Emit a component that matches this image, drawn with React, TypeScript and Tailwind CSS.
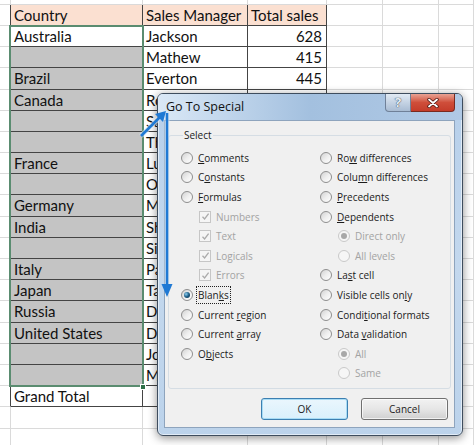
import React from "react";

type Row = { a: string; b: string; c: string; kind: "header" | "body" | "total" };

const rows: Row[] = [
  { a: "Country", b: "Sales Manager", c: "Total sales", kind: "header" },
  { a: "Australia", b: "Jackson", c: "628", kind: "body" },
  { a: "", b: "Mathew", c: "415", kind: "body" },
  { a: "Brazil", b: "Everton", c: "445", kind: "body" },
  { a: "Canada", b: "Robert", c: "512", kind: "body" },
  { a: "", b: "Sam", c: "", kind: "body" },
  { a: "", b: "Thomas", c: "", kind: "body" },
  { a: "France", b: "Luis", c: "", kind: "body" },
  { a: "", b: "Oliver", c: "", kind: "body" },
  { a: "Germany", b: "Mark", c: "", kind: "body" },
  { a: "India", b: "Shawn", c: "", kind: "body" },
  { a: "", b: "Simon", c: "", kind: "body" },
  { a: "Italy", b: "Paul", c: "", kind: "body" },
  { a: "Japan", b: "Taro", c: "", kind: "body" },
  { a: "Russia", b: "Denis", c: "", kind: "body" },
  { a: "United States", b: "Daniel", c: "", kind: "body" },
  { a: "", b: "John", c: "", kind: "body" },
  { a: "", b: "Mike", c: "", kind: "body" },
  { a: "Grand Total", b: "", c: "", kind: "total" },
];

type Opt = {
  t: string;
  k?: number;
  cb?: boolean;
  indent?: boolean;
  disabled?: boolean;
  checked?: boolean;
  focus?: boolean;
};

const leftOpts: Opt[] = [
  { t: "Comments", k: 0 },
  { t: "Constants", k: 1 },
  { t: "Formulas", k: 0 },
  { t: "Numbers", cb: true, indent: true, disabled: true },
  { t: "Text", cb: true, indent: true, disabled: true },
  { t: "Logicals", cb: true, indent: true, disabled: true },
  { t: "Errors", cb: true, indent: true, disabled: true },
  { t: "Blanks", k: 4, checked: true, focus: true },
  { t: "Current region", k: 8 },
  { t: "Current array", k: 8 },
  { t: "Objects", k: 1 },
];

const rightOpts: Opt[] = [
  { t: "Row differences", k: 2 },
  { t: "Column differences", k: 4 },
  { t: "Precedents", k: 0 },
  { t: "Dependents", k: 0 },
  { t: "Direct only", indent: true, disabled: true, checked: true },
  { t: "All levels", indent: true, disabled: true },
  { t: "Last cell", k: 2 },
  { t: "Visible cells only", k: 16 },
  { t: "Conditional formats", k: 5 },
  { t: "Data validation", k: 5 },
  { t: "All", indent: true, disabled: true, checked: true },
  { t: "Same", indent: true, disabled: true },
];

function SheetRow({ row }: { row: Row }) {
  const grid = "border-r border-b border-[#dadada]";
  const dark = "border-r border-b border-[#444]";
  const head = row.kind === "header" ? "bg-[#fbe0d1]" : "bg-white";
  const countryBg =
    row.kind === "header" ? "bg-[#fbe0d1]" : row.kind === "body" && row.a !== "Australia" ? "bg-[#c4c4c4]" : "bg-white";
  return (
    <div className="flex h-[21.2px] leading-[21px]">
      <div className="w-[11px] shrink-0 border-r border-b border-r-[#444] border-b-[#dadada]" />
      <div className={`w-[132px] shrink-0 pl-[3px] ${dark} ${countryBg}`}>{row.a}</div>
      <div className={`w-[105px] shrink-0 pl-[3px] overflow-hidden whitespace-nowrap ${dark} ${head}`}>{row.b}</div>
      <div
        className={`w-[79px] shrink-0 ${dark} ${head} ${row.kind === "header" ? "pl-[3px]" : "pr-[4px] text-right"}`}
      >
        {row.c}
      </div>
      <div className={`w-[56px] shrink-0 ${grid}`} />
      <div className={`w-[56px] shrink-0 ${grid}`} />
      <div className={`flex-1 ${grid}`} />
    </div>
  );
}

function EmptyRow({ h }: { h: string }) {
  const grid = "border-r border-b border-[#dadada]";
  return (
    <div className={`flex ${h}`}>
      <div className={`w-[11px] shrink-0 ${grid}`} />
      <div className={`w-[132px] shrink-0 ${grid}`} />
      <div className={`w-[105px] shrink-0 ${grid}`} />
      <div className={`w-[79px] shrink-0 ${grid}`} />
      <div className={`w-[56px] shrink-0 ${grid}`} />
      <div className={`w-[56px] shrink-0 ${grid}`} />
      <div className={`flex-1 ${grid}`} />
    </div>
  );
}

function Radio({ checked, disabled }: { checked?: boolean; disabled?: boolean }) {
  return (
    <span
      className={`flex h-[12px] w-[12px] shrink-0 items-center justify-center rounded-full border ${
        disabled
          ? "border-[#c9c9c9] bg-[#f6f6f6]"
          : "border-[#8e8e8e] bg-linear-to-br from-[#d2d2d2] via-[#eeeeee] to-white"
      }`}
    >
      {checked && (
        <span
          className={`h-[6px] w-[6px] rounded-full ${
            disabled ? "bg-[#a8a8a8]" : "bg-radial-[at_35%_35%] from-[#8fd0f0] via-[#1d5d86] to-[#0d2a40]"
          }`}
        />
      )}
    </span>
  );
}

function Check() {
  return (
    <span className="flex h-[12px] w-[12px] shrink-0 items-center justify-center border border-[#c6c6c6] bg-[#f5f5f5]">
      <svg width="9" height="9" viewBox="0 0 9 9">
        <path d="M1.5 4.8 L3.6 7 L7.6 1.6" fill="none" stroke="#ababab" strokeWidth="1.3" />
      </svg>
    </span>
  );
}

function Label({ o }: { o: Opt }) {
  const text =
    o.k === undefined ? (
      o.t
    ) : (
      <>
        {o.t.slice(0, o.k)}
        <u className="underline-offset-[1px]">{o.t[o.k]}</u>
        {o.t.slice(o.k + 1)}
      </>
    );
  return (
    <span
      className={`whitespace-nowrap ${o.disabled ? "text-[#a3a3a3]" : "text-[#1b1b1b]"} ${
        o.focus ? "outline outline-1 outline-dotted outline-[#222] outline-offset-[1px]" : ""
      }`}
    >
      {text}
    </span>
  );
}

function Option({ o }: { o: Opt }) {
  return (
    <div className={`flex h-[19.6px] items-center gap-[5px] ${o.indent ? "pl-[18px]" : ""}`}>
      {o.cb ? <Check /> : <Radio checked={o.checked} disabled={o.disabled} />}
      <Label o={o} />
    </div>
  );
}

function Dialog() {
  return (
    <div
      className="absolute left-[157px] top-[93px] flex h-[343px] w-[306px] flex-col rounded-[6px] border border-[#3e4d5e] bg-linear-to-b from-[#b6cfea] via-[#c3d8ee] to-[#bcd3eb] shadow-[0_2px_10px_rgba(0,0,0,0.45),inset_0_0_0_1px_rgba(255,255,255,0.55)]"
      style={{ fontFamily: '"Open Sans", "Noto Sans", sans-serif' }}
    >
      <div className="flex h-[26px] shrink-0 items-start justify-between rounded-t-[5px] bg-linear-to-r from-[#dae8f6] via-[#a3c0df] to-[#b0c9e5] pl-[8px] pr-[7px]">
        <span className="self-center text-[12.5px] text-[#111]">Go To Special</span>
        <div className="flex">
          <div className="flex h-[18px] w-[26px] items-center justify-center rounded-bl-[4px] border border-t-0 border-[#6f8098] bg-linear-to-b from-[#e1eaf4] to-[#a9bcd3]">
            <span className="text-[13px] font-bold leading-none text-[#e8eef5] [text-shadow:0_0_1px_#3a4a5e,0_0_1px_#3a4a5e]">
              ?
            </span>
          </div>
          <div className="flex h-[18px] w-[44px] items-center justify-center rounded-br-[4px] border border-l-0 border-t-0 border-[#7a2a20] bg-linear-to-b from-[#e8a294] via-[#cf4e3a] to-[#c43c2a]">
            <svg width="12" height="10" viewBox="0 0 12 10">
              <path d="M2 1.5 L10 8.5 M10 1.5 L2 8.5" stroke="#4a1510" strokeWidth="3.4" strokeLinecap="round" />
              <path d="M2 1.5 L10 8.5 M10 1.5 L2 8.5" stroke="#ffffff" strokeWidth="1.8" strokeLinecap="round" />
            </svg>
          </div>
        </div>
      </div>
      <div className="mb-[7px] ml-[6px] mr-[7px] flex-1 border border-[#8ea4bd] bg-[#f0f0f0] px-[3px] pt-[7px] text-[10px] leading-[14px]">
        <fieldset className="rounded-[3px] border border-[#d5dde4] pb-[5px] pl-[12px] pt-[6px]">
          <legend className="ml-[2px] px-[1px] text-[#1b1b1b]">Select</legend>
          <div className="flex">
            <div className="w-[139px] shrink-0">
              {leftOpts.map((o) => (
                <Option key={o.t} o={o} />
              ))}
            </div>
            <div>
              {rightOpts.map((o) => (
                <Option key={o.t} o={o} />
              ))}
            </div>
          </div>
        </fieldset>
        <div className="mt-[9px] flex justify-end gap-[13px] pr-[3px]">
          <button className="h-[22px] w-[87px] rounded-[3px] border border-[#3c7fb1] bg-linear-to-b from-[#eaf6fd] to-[#d9f0fc] text-[#1b1b1b] shadow-[inset_0_0_0_1px_#a8dcf5]">
            OK
          </button>
          <button className="h-[22px] w-[87px] rounded-[3px] border border-[#707070] bg-linear-to-b from-[#f2f2f2] via-[#e6e6e6] to-[#d0d0d0] text-[#1b1b1b] shadow-[inset_0_0_0_1px_rgba(255,255,255,0.7)]">
            Cancel
          </button>
        </div>
      </div>
    </div>
  );
}

function Arrows() {
  return (
    <svg className="pointer-events-none absolute left-0 top-0" width="474" height="445" viewBox="0 0 474 445">
      <g stroke="#dbe9f7" strokeWidth="5" opacity="0.6">
        <line x1="167" y1="113" x2="167" y2="286" />
        <line x1="141" y1="136" x2="161" y2="116" />
      </g>
      <g stroke="#1f79d4" strokeWidth="2.6">
        <line x1="167" y1="113" x2="167" y2="286" />
        <line x1="141" y1="136" x2="161" y2="116" />
      </g>
      <polygon points="167,297 161.5,284 172.5,284" fill="#1f79d4" />
      <polygon points="166,111 163,122 155,114" fill="#1f79d4" />
    </svg>
  );
}

export default function App() {
  return (
    <div
      className="relative h-[445px] w-[474px] overflow-hidden bg-white text-[15px] text-[#111]"
      style={{ fontFamily: "Lato, 'Liberation Sans', sans-serif" }}
    >
      <EmptyRow h="h-[4.8px]" />
      {rows.map((r, i) => (
        <SheetRow key={i} row={r} />
      ))}
      <EmptyRow h="h-[21.2px]" />
      <EmptyRow h="h-[21.2px]" />

      {/* selection outline on the Country column */}
      <div className="pointer-events-none absolute left-[9px] top-[25px] h-[362px] w-[135px] border-2 border-[#5a8c70]" />
      <div className="absolute left-[140px] top-[384px] h-[6px] w-[6px] border border-white bg-[#2e7048]" />

      <Dialog />
      <Arrows />
    </div>
  );
}
